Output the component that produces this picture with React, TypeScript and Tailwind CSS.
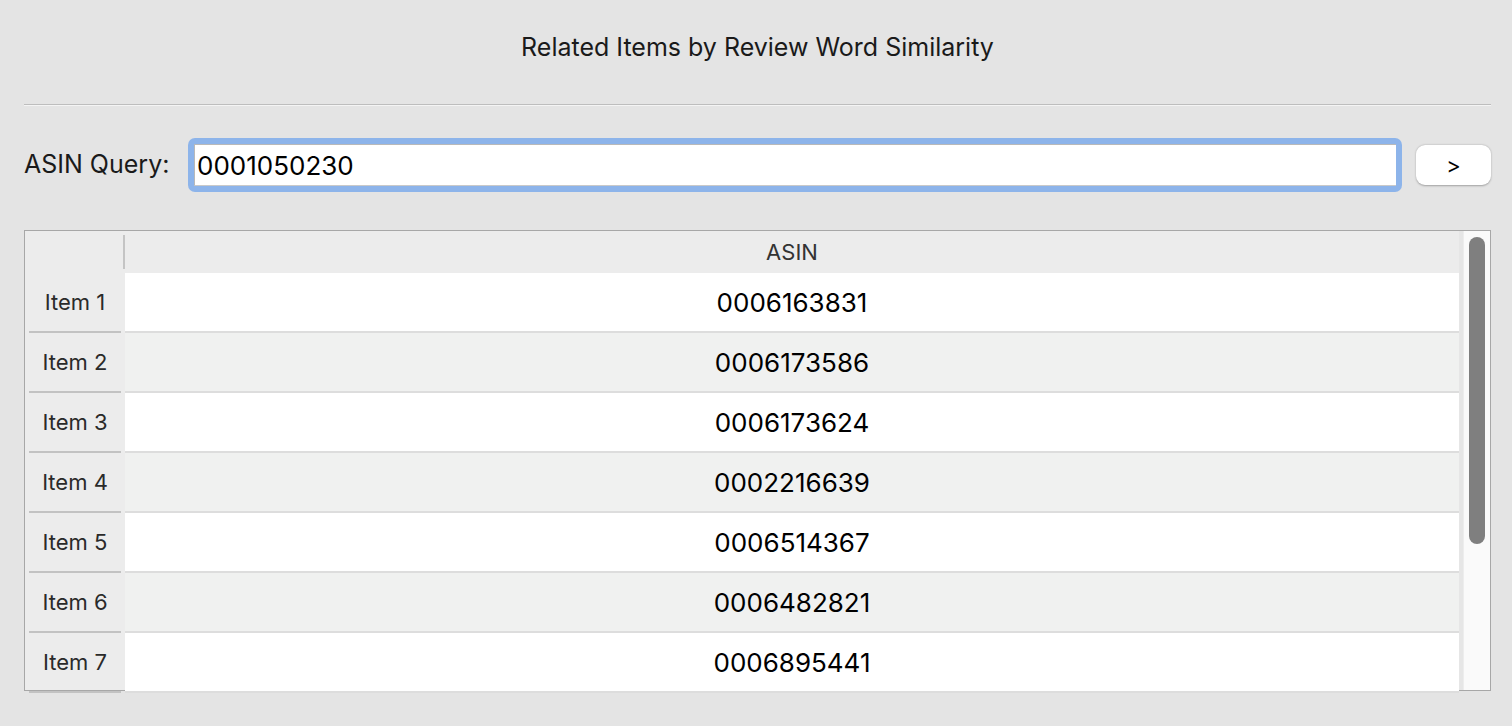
const rows = [
  "0006163831",
  "0006173586",
  "0006173624",
  "0002216639",
  "0006514367",
  "0006482821",
  "0006895441",
];

export default function App() {
  return (
    <div
      className="w-[1512px] h-[726px] bg-[#e4e4e4] text-black overflow-hidden flex flex-col pl-6 pr-[21px]"
      style={{ fontFamily: "Inter, 'Noto Sans', sans-serif" }}
    >
      <h1 className="h-[94px] pt-[30px] text-center text-[25px] leading-[34px] text-[#1a1a1a]">
        Related Items by Review Word Similarity
      </h1>
      <div className="h-[1px] bg-[#bdbdbd] mt-[10px]" />
      <div className="h-[1px] bg-[#f4f4f4]" />

      <div className="flex items-center mt-[32px] h-[54px]">
        <span className="text-[25px] text-[#1a1a1a] w-[164px] shrink-0">ASIN Query:</span>
        <div className="flex-1 rounded-[7px] bg-[#8db4ea] p-[6px] h-[54px]">
          <div className="h-full bg-white border-t border-l border-[#b9b9b9] border-b border-b-[#c9c9c9] flex items-center pl-[2px] text-[26px]">
            0001050230
          </div>
        </div>
        <button className="ml-[14px] w-[75px] h-[40px] bg-white rounded-[9px] shadow-[0_0.5px_2px_rgba(0,0,0,0.3)] text-[22px] flex items-center justify-center">
          &gt;
        </button>
      </div>

      <div className="mt-[38px] h-[461px] border border-[#a7a7a7] flex bg-[#ececec]">
        <div className="flex-1 flex flex-col min-w-0">
          <div className="h-[42px] flex shrink-0">
            <div className="w-[100px] flex items-center justify-end">
              <div className="w-[2px] h-[34px] bg-[#c4c4c4]" />
            </div>
            <div className="flex-1 flex items-center justify-center text-[22px] text-[#333]">ASIN</div>
          </div>
          {rows.map((v, i) => (
            <div key={v} className="flex h-[60px] shrink-0">
              <div className="w-[100px] flex flex-col">
                <div className="flex-1 flex items-center justify-center text-[22px] text-[#2a2a2a]">
                  Item {i + 1}
                </div>
                <div className="h-[2px] mx-[4px] bg-[#c2c2c2]" />
              </div>
              <div className="flex-1 flex flex-col">
                <div
                  className={
                    "flex-1 flex items-center justify-center text-[26px] " +
                    (i % 2 === 0 ? "bg-white" : "bg-[#f0f1f0]")
                  }
                >
                  {v}
                </div>
                <div className="h-[2px] bg-[#dddddd]" />
              </div>
            </div>
          ))}
        </div>
        <div className="w-[4px] bg-[#e6e6e6]" />
        <div className="w-[27px] bg-[#fafafa] border-l border-[#ededed] pt-[6px] flex justify-center">
          <div className="w-[16px] h-[307px] rounded-full bg-[#7f7f7f]" />
        </div>
      </div>
    </div>
  );
}
